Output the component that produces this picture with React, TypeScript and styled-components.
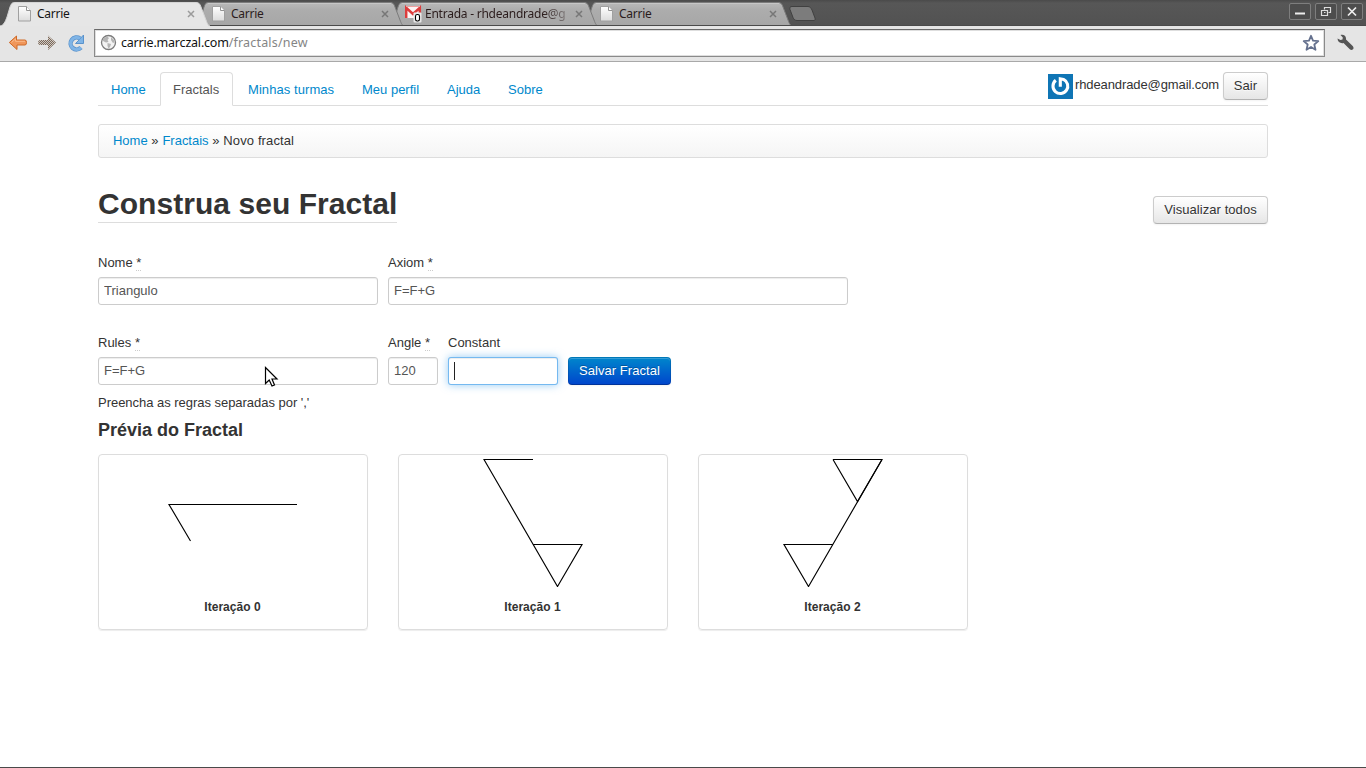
import React from 'react';
import styled, { createGlobalStyle, css } from 'styled-components';

const GlobalStyle = createGlobalStyle`
  *, *::before, *::after { box-sizing: border-box; }
  body {
    margin: 0;
    background: #fff;
    color: #333;
    font: 13px/18px 'Liberation Sans', Arial, sans-serif;
    overflow: hidden;
  }
`;

const Screen = styled.div`
  position: relative;
  display: flex;
  flex-direction: column;
  width: 1366px;
  height: 768px;
  border-bottom: 1px solid #4a4a4a;
`;

/* ---------- browser window ---------- */

const TabStrip = styled.header`
  display: flex;
  height: 26px;
  padding-top: 1px;
  background: linear-gradient(#4a4a4a, #575757 3px, #525252);
  border-bottom: 1px solid #4a4a4a;
  font: 12px/16px 'Noto Sans', sans-serif;
`;

const TabBox = styled.div<{ $order: number; $active?: boolean }>`
  position: relative;
  z-index: ${(p) => 10 - p.$order};
  display: flex;
  align-items: center;
  width: 210px;
  height: ${(p) => (p.$active ? 25 : 24)}px;
  margin-right: -16px;
  padding: 1px 15px 0 17px;
  color: ${(p) => (p.$active ? '#141414' : '#2b1c1c')};
`;

const TabShape = styled.svg`
  position: absolute;
  inset: 0;
  z-index: -1;
`;

const TabTitle = styled.span<{ $fade?: boolean }>`
  flex: 1;
  margin-left: 4px;
  white-space: nowrap;
  letter-spacing: -0.24px;
  ${(p) => p.$fade && css`
    margin-left: 3px;
    mask-image: linear-gradient(90deg, #000 118px, rgba(0, 0, 0, 0.25) 143px);
  `}
`;

const CloseMark = styled.svg`
  margin: 0 0 0 8px;
`;

const NewTab = styled.svg`
  margin: 5px 0 0 13px;
`;

const WindowButtons = styled.div`
  display: flex;
  gap: 4px;
  margin: 2px 3px 0 auto;
`;

const WindowButton = styled.div`
  display: flex;
  align-items: center;
  justify-content: center;
  width: 22px;
  height: 17px;
  border: 1px solid #7e7e7e;
  border-radius: 2px;
  background: #4d4d4d;
`;

const Toolbar = styled.div`
  display: flex;
  align-items: center;
  height: 36px;
  padding: 0 12px 2px 8px;
  background: #e5e5e5;
  border-bottom: 1px solid #a9a9a9;
`;

const ToolIcon = styled.svg<{ $gap: number }>`
  flex: none;
  margin-right: ${(p) => p.$gap}px;
`;

const AddressBar = styled.div`
  display: flex;
  flex: 1;
  align-items: center;
  height: 28px;
  margin-right: 12px;
  padding: 0 4px 0 5px;
  border: 1px solid #8a8a8a;
  border-top-color: #696969;
  background: #fff;
  box-shadow: inset 0 0 0 1px #dedede;
  font: 12.5px/16px 'Noto Sans', sans-serif;
  color: #111;
`;

const Url = styled.span`
  flex: 1;
  margin-left: 4px;
  padding-top: 1px;
  letter-spacing: -0.2px;
`;

const UrlPath = styled.span`
  color: #858585;
  letter-spacing: 0.18px;
`;

/* ---------- page ---------- */

const Page = styled.main`
  width: 1170px;
  margin: 10px 0 0 98px;
`;

const NavBar = styled.nav`
  display: flex;
  height: 34px;
  border-bottom: 1px solid #ddd;
`;

const NavItem = styled.a<{ $width: number; $active?: boolean }>`
  width: ${(p) => p.$width}px;
  height: 34px;
  margin-right: 2px;
  padding: 8px 0 7px 12px;
  border: 1px solid transparent;
  border-radius: 4px 4px 0 0;
  color: #08c;
  letter-spacing: ${(p) => (p.$width > 100 ? 0.07 : 0)}px;
  white-space: nowrap;
  ${(p) => p.$active && css`
    color: #555;
    background: #fff;
    border-color: #ddd #ddd #fff;
  `}
`;

const Account = styled.div`
  display: flex;
  align-items: flex-start;
  margin-left: auto;
`;

const Avatar = styled.svg`
  margin: 2px 2px 0 0;
`;

const Email = styled.span`
  margin: 4px 4px 0 0;
  letter-spacing: -0.1px;
`;

const Button = styled.button<{ $width: number; $primary?: boolean }>`
  width: ${(p) => p.$width}px;
  height: 28px;
  padding: 4px 0;
  border: 1px solid #ccc;
  border-bottom-color: #b3b3b3;
  border-radius: 4px;
  font: inherit;
  letter-spacing: 0.06px;
  color: #333;
  text-shadow: 0 1px 1px rgba(255, 255, 255, 0.75);
  white-space: nowrap;
  background: linear-gradient(#fff, #e6e6e6);
  box-shadow: inset 0 1px 0 rgba(255, 255, 255, 0.2), 0 1px 2px rgba(0, 0, 0, 0.05);
  ${(p) => p.$primary && css`
    color: #fff;
    text-shadow: 0 -1px 0 rgba(0, 0, 0, 0.25);
    background: linear-gradient(#08c, #04c) border-box;
    border-color: rgba(0, 0, 0, 0.1) rgba(0, 0, 0, 0.1) rgba(0, 0, 0, 0.25);
  `}
`;

const Breadcrumb = styled.div`
  height: 34px;
  margin-top: 18px;
  padding: 7px 14px;
  border: 1px solid #ddd;
  border-radius: 3px;
  background: linear-gradient(#fff, #f5f5f5);
  box-shadow: inset 0 1px 0 #fff;
  letter-spacing: 0.12px;
`;

const Link = styled.a`
  color: #08c;
  letter-spacing: -0.02px;
`;

const TitleRow = styled.div`
  display: flex;
  justify-content: space-between;
  align-items: flex-start;
  margin-top: 28px;
`;

const Title = styled.h1`
  margin: 0;
  height: 37px;
  border-bottom: 1px solid #ddd;
  font-size: 30px;
  line-height: 36px;
  letter-spacing: 0.05px;
`;

const TitleAction = styled.div`
  margin-top: 10px;
`;

const FormRow = styled.div<{ $top: number }>`
  display: flex;
  align-items: flex-end;
  gap: 10px;
  margin-top: ${(p) => p.$top}px;
`;

const Field = styled.label<{ $width: number }>`
  display: flex;
  flex-direction: column;
  gap: 5px;
  width: ${(p) => p.$width}px;
`;

const Required = styled.abbr`
  border-bottom: 1px dotted #ccc;
`;

const inputBox = css`
  width: 100%;
  height: 28px;
  padding: 3px 5px 5px;
  border: 1px solid #ccc;
  border-radius: 3px;
  background: #fff;
  box-shadow: inset 0 1px 1px rgba(0, 0, 0, 0.075);
`;

const Input = styled.input`
  ${inputBox}
  font: inherit;
  color: #555;
  outline: none;
`;

const FocusedInput = styled.div`
  ${inputBox}
  border-color: rgba(82, 168, 236, 0.8);
  box-shadow: inset 0 1px 1px rgba(0, 0, 0, 0.075), 0 0 8px rgba(82, 168, 236, 0.6);
`;

const Caret = styled.div`
  width: 1px;
  height: 18px;
  margin-top: 1px;
  background: #222;
`;

const Hint = styled.p`
  margin: 9px 0 0;
  letter-spacing: -0.03px;
`;

const Subtitle = styled.h3`
  margin: 5px 0 0;
  font-size: 18px;
  line-height: 27px;
`;

const Previews = styled.div`
  display: flex;
  gap: 30px;
  margin-top: 10px;
`;

const Card = styled.figure`
  width: 270px;
  height: 176px;
  margin: 0;
  padding: 4px;
  border: 1px solid #ddd;
  border-radius: 4px;
  box-shadow: 0 1px 1px rgba(0, 0, 0, 0.075);
`;

const Drawing = styled.svg`
  display: block;
  fill: none;
  stroke: #000;
  stroke-width: 1.15;
`;

const Caption = styled.figcaption`
  margin-top: 11px;
  padding-right: 1px;
  font-size: 12px;
  font-weight: bold;
  letter-spacing: 0.04px;
  text-align: center;
`;

const Pointer = styled.svg`
  position: absolute;
  left: 264px;
  top: 366px;
`;

const PageIcon = () => (
  <svg width="16" height="18" viewBox="0 0 16 18">
    <defs>
      <linearGradient id="paper" x2="0" y2="1">
        <stop stopColor="#fff" />
        <stop offset="1" stopColor="#dcdcdc" />
      </linearGradient>
    </defs>
    <path d="M1.500 1.500h8l4 4v10.500h-12z" fill="url(#paper)" stroke="#a0a0a0" />
    <path d="M9.500 1.500v4h4" fill="#fff" stroke="#929292" />
  </svg>
);

const MailIcon = () => (
  <svg width="17" height="18" viewBox="0 0 17 18">
    <path d="M0 1h16v12H0z" fill="#fdf3f3" />
    <path d="M1.200 13V2.800L8 9l6.800-6.200V13" fill="none" stroke="#dc3c3c" strokeWidth="2.500" />
    <path d="M1 1.500h14" stroke="#eda0a0" />
    <rect x="8.500" y="7.500" width="8" height="10" rx="1" fill="#e9e9e9" />
    <rect x="10.500" y="9.500" width="4" height="6.500" rx="1.700" fill="#fff" stroke="#000" strokeWidth="1.100" />
  </svg>
);

type TabProps = { title: string; order: number; active?: boolean; mail?: boolean };

const Tab = ({ title, order, active, mail }: TabProps) => (
  <TabBox $order={order} $active={active}>
    <TabShape width="210" height={active ? 25 : 24} viewBox={`0 0 210 ${active ? 25 : 24}`}>
      <defs>
        <linearGradient id="idle" x2="0" y2="1">
          <stop stopColor="#b9b9b9" />
          <stop offset="0.300" stopColor="#adadad" />
          <stop offset="1" stopColor="#a6a6a6" />
        </linearGradient>
      </defs>
      <path
        d="M0 25C4 24 5 21 7 16L10 6C11.500 2 12.500 1.500 15 1.500H196C199 1.500 200 3 201 6L206 19C207.500 23 208 24 210 25"
        fill={active ? '#e6e6e6' : 'url(#idle)'}
        stroke={active ? '#d5d5d5' : '#7b7b7b'}
      />
      {!active && <path d="M14 2.500H197" stroke="#c6c6c6" />}
    </TabShape>
    {mail ? <MailIcon /> : <PageIcon />}
    <TabTitle $fade={mail}>{title}</TabTitle>
    <CloseMark width="8" height="8" viewBox="0 0 8 8">
      <path d="M1 1l6 6M7 1L1 7" stroke={active ? '#9b9b9b' : '#777'} strokeWidth="1.500" />
    </CloseMark>
  </TabBox>
);

const Label = ({ text, required }: { text: string; required?: boolean }) => (
  <span>
    {text} {required && <Required>*</Required>}
  </span>
);

const navItems = [
  { text: 'Home', width: 60 },
  { text: 'Fractals', width: 73, active: true },
  { text: 'Minhas turmas', width: 112 },
  { text: 'Meu perfil', width: 83 },
  { text: 'Ajuda', width: 59 },
  { text: 'Sobre', width: 60 },
];

const previews = [
  { caption: 'Iteração 0', lines: ['M194 45.500H66L87.500 82'] },
  { caption: 'Iteração 1', lines: ['M130 .5H81L154.500 127.500L179 85.500H130'] },
  { caption: 'Iteração 2', lines: ['M130 .5H179L105.500 127.500L81 85.500H130', 'M130 .5L154.500 42.500L179 .5'] },
];

const App = () => (
  <Screen>
    <GlobalStyle />
    <TabStrip>
      <Tab title="Carrie" order={0} active />
      <Tab title="Carrie" order={1} />
      <Tab title="Entrada - rhdeandrade@g" order={2} mail />
      <Tab title="Carrie" order={3} />
      <NewTab width="27" height="16" viewBox="0 0 27 16">
        <path d="M3 .5H19C21 .5 22 2 23 4L26 12C26.500 13.500 26 14.500 25 14.500H8C6 14.500 5 13.500 4 11.500L1 3.500C.5 1.500 1 .5 3 .5Z" fill="#7c7c7c" stroke="#404040" />
      </NewTab>
      <WindowButtons>
        <WindowButton>
          <svg width="12" height="11"><path d="M1 7.500h10" stroke="#eee" strokeWidth="2" /></svg>
        </WindowButton>
        <WindowButton>
          <svg width="12" height="11" fill="none" stroke="#ddd" strokeWidth="1.200">
            <path d="M4.500 3.500V1.500h6v5h-2M1.500 4.500h6v5h-6zM4 6.500h1.500" />
          </svg>
        </WindowButton>
        <WindowButton>
          <svg width="12" height="11"><path d="M2 1.500l8 8M10 1.500l-8 8" stroke="#eee" strokeWidth="1.700" /></svg>
        </WindowButton>
      </WindowButtons>
    </TabStrip>

    <Toolbar>
      <ToolIcon $gap={9} width="20" height="18" viewBox="0 0 20 18">
        <path d="M1.300 8.500L8.500 2V6H17Q18.500 6 18.500 8.500Q18.500 11 17 11H9V15.500Z" fill="#f0965a" stroke="#cf6a28" strokeLinejoin="round" />
        <path d="M3.500 8.500L7.500 4.800v2.500H17" fill="none" stroke="#f9b989" />
      </ToolIcon>
      <ToolIcon $gap={10} width="20" height="18" viewBox="0 0 20 18">
        <defs>
          <pattern id="dither" width="2" height="2" patternUnits="userSpaceOnUse">
            <path d="M0 0h2v2H0z" fill="#cfc8c2" />
            <path d="M0 0h1v1H0zM1 1h1v1H1z" fill="#7a6859" />
          </pattern>
        </defs>
        <path d="M19 8.500L11 1.500V6H3Q1 6 1 8.500Q1 11 3 11H11V16Z" fill="url(#dither)" />
      </ToolIcon>
      <ToolIcon $gap={9} width="18" height="18" viewBox="0 0 18 18">
        <path d="M13 4.500A6 6 0 1 0 14 13.500" fill="none" stroke="#5a93cc" strokeWidth="4.400" />
        <path d="M16.500 1v8.500H8.500L12 6Z" fill="#7fb4e6" stroke="#5a93cc" strokeLinejoin="round" />
        <path d="M13 4.500A6 6 0 1 0 14 13.500" fill="none" stroke="#7fb4e6" strokeWidth="3" />
      </ToolIcon>
      <AddressBar>
        <svg width="17" height="17" viewBox="0 0 17 17">
          <circle cx="8.500" cy="8.500" r="7" fill="#f3f3f3" stroke="#7c7c7c" strokeWidth="1.300" />
          <path d="M3 4.500L7 2.500L9 4L7.500 6L8.500 8L6 8.500L3 7ZM7.500 9L11 10L10 13L8.500 14.500L7.500 12ZM11 3L14 6L14.500 9L12.500 8.500L11 6Z" fill="#b4b4b4" />
        </svg>
        <Url>carrie.marczal.com<UrlPath>/fractals/new</UrlPath></Url>
        <svg width="18" height="18" viewBox="0 0 18 18">
          <path d="M9 1.800L11 6.700L16.300 7.100L12.300 10.500L13.500 15.800L9 13L4.500 15.800L5.700 10.500L1.700 7.100L7 6.700Z" fill="#fff" stroke="#65718e" strokeWidth="1.800" strokeLinejoin="round" />
        </svg>
      </AddressBar>
      <svg width="17" height="17" viewBox="0 0 17 17">
        <path d="M3.500 1C6.500 0 9.500 2 9 5.500L15.700 12Q17.200 13.800 16 15.200Q14.500 16.700 12.800 15.200L6.500 9C3.500 9.800 .6 7.800 .5 4.500L3.500 6L5.500 5.500L5.800 3.500Z" fill="#555" />
      </svg>
    </Toolbar>

    <Page>
      <NavBar>
        {navItems.map((item) => (
          <NavItem key={item.text} $width={item.width} $active={item.active}>
            {item.text}
          </NavItem>
        ))}
        <Account>
          <Avatar width="25" height="25" viewBox="0 0 25 25">
            <path d="M0 0h25v25H0z" fill="#0f75b5" />
            <path d="M7.800 6.300A7.400 7.400 0 1 0 15.500 5.400L12.300 4.800V12.800" fill="none" stroke="#fff" strokeWidth="3.100" />
          </Avatar>
          <Email>rhdeandrade@gmail.com</Email>
          <Button $width={45}>Sair</Button>
        </Account>
      </NavBar>

      <Breadcrumb>
        <Link>Home</Link> » <Link>Fractais</Link> » Novo fractal
      </Breadcrumb>

      <TitleRow>
        <Title>Construa seu Fractal</Title>
        <TitleAction>
          <Button $width={115}>Visualizar todos</Button>
        </TitleAction>
      </TitleRow>

      <FormRow $top={30}>
        <Field $width={280}>
          <Label text="Nome" required />
          <Input defaultValue="Triangulo" />
        </Field>
        <Field $width={460}>
          <Label text="Axiom" required />
          <Input defaultValue="F=F+G" />
        </Field>
      </FormRow>

      <FormRow $top={29}>
        <Field $width={280}>
          <Label text="Rules" required />
          <Input defaultValue="F=F+G" />
        </Field>
        <Field $width={50}>
          <Label text="Angle" required />
          <Input defaultValue="120" />
        </Field>
        <Field $width={110}>
          <Label text="Constant" />
          <FocusedInput>
            <Caret />
          </FocusedInput>
        </Field>
        <Button $width={103} $primary>Salvar Fractal</Button>
      </FormRow>
      <Hint>Preencha as regras separadas por ','</Hint>

      <Subtitle>Prévia do Fractal</Subtitle>
      <Previews>
        {previews.map((p) => (
          <Card key={p.caption}>
            <Drawing width="260" height="128" viewBox="0 0 260 128">
              {p.lines.map((d) => (
                <path key={d} d={d} />
              ))}
            </Drawing>
            <Caption>{p.caption}</Caption>
          </Card>
        ))}
      </Previews>
    </Page>

    <Pointer width="16" height="22" viewBox="0 0 16 22">
      <path d="M1.500 1.500V17.500L5.200 14L8 20L10.500 19L8 13H13Z" fill="#fff" stroke="#000" strokeWidth="1.200" />
    </Pointer>
  </Screen>
);

export default App;
